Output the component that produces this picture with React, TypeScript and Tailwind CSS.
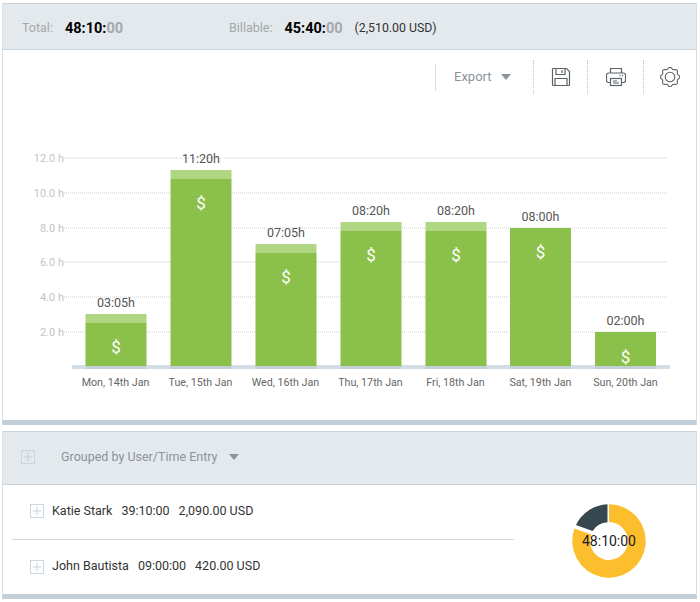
const days = [
  { label: "Mon, 14th Jan", time: "03:05h", x: 85.5, top: 314, billable: 323 },
  { label: "Tue, 15th Jan", time: "11:20h", x: 170.5, top: 170, billable: 179 },
  { label: "Wed, 16th Jan", time: "07:05h", x: 255.5, top: 244, billable: 253 },
  { label: "Thu, 17th Jan", time: "08:20h", x: 340.5, top: 222, billable: 231 },
  { label: "Fri, 18th Jan", time: "08:20h", x: 425.5, top: 222, billable: 231 },
  { label: "Sat, 19th Jan", time: "08:00h", x: 510, top: 228, billable: 228 },
  { label: "Sun, 20th Jan", time: "02:00h", x: 595, top: 332, billable: 332 },
];

const ticks = [
  { label: "12.0 h", y: 158 },
  { label: "10.0 h", y: 193 },
  { label: "8.0 h", y: 228 },
  { label: "6.0 h", y: 262 },
  { label: "4.0 h", y: 297 },
  { label: "2.0 h", y: 332 },
];

const users = [
  { name: "Katie Stark", time: "39:10:00", amount: "2,090.00 USD" },
  { name: "John Bautista", time: "09:00:00", amount: "420.00 USD" },
];

// scalloped outline of the settings gear
const gearPath =
  Array.from({ length: 96 }, (_, i) => {
    const a = (i / 96) * Math.PI * 2;
    const r = 8.9 + 0.9 * Math.cos(8 * a);
    return `${i === 0 ? "M" : "L"}${(10 + r * Math.sin(a)).toFixed(2)} ${(10 - r * Math.cos(a)).toFixed(2)}`;
  }).join("") + "Z";

function PlusBox({ className }: { className: string }) {
  return (
    <svg viewBox="0 0 15 15" className={className} fill="none">
      <rect x="0.5" y="0.5" width="14" height="14" stroke="#c9d4dc" />
      <path d="M7.5 3v9M3 7.5h9" stroke="#c3ced6" />
    </svg>
  );
}

function Caret() {
  return <span className="border-x-[5.5px] border-t-[6px] border-x-transparent border-t-[#8c9499]" />;
}

function FloppyIcon() {
  return (
    <svg viewBox="0 0 20 20" className="h-[20px] w-[20px]" fill="none" stroke="#5b6368" strokeWidth="1.2">
      <path d="M1.500 2.500a1 1 0 0 1 1-1h13l3 3v13a1 1 0 0 1-1 1h-15a1 1 0 0 1-1-1z" />
      <path d="M5 1.500v6h9v-6M11 3v3M4 18.500v-7h12v7" />
    </svg>
  );
}

function PrinterIcon() {
  return (
    <svg viewBox="0 0 20 20" className="h-[20px] w-[20px]" fill="none" stroke="#5b6368" strokeWidth="1.2">
      <path d="M4.500 6V1.500h11V6" />
      <path d="M4.500 15.500h-2a2 2 0 0 1-2-2V8a2 2 0 0 1 2-2h15a2 2 0 0 1 2 2v5.500a2 2 0 0 1-2 2h-2" />
      <rect x="4.500" y="11.500" width="11" height="7" />
      <path d="M7 14h4M7 16h6" strokeWidth="1" />
      <path d="M13.500 8.500h1M16 8.500h1" strokeWidth="1.4" />
    </svg>
  );
}

function GearIcon() {
  return (
    <svg viewBox="0 0 20 20" className="h-[20px] w-[20px]" fill="none" stroke="#5b6368" strokeWidth="1.1">
      <path d={gearPath} />
      <circle cx="10" cy="10" r="4.800" />
    </svg>
  );
}

function WeekChart() {
  return (
    <svg viewBox="3 100 694 270" className="block h-[270px] w-[694px]" style={{ fontFamily: "Roboto, sans-serif" }}>
      {ticks.map((t) => (
        <g key={t.label}>
          <line x1="64" x2="667" y1={t.y} y2={t.y} stroke="#cfcfcf" strokeDasharray="1 1" />
          <text x="64" y={t.y + 4} textAnchor="end" fontSize="11" fill="#c4c4c4">
            {t.label}
          </text>
        </g>
      ))}
      <rect x="72" y="365" width="598" height="4" fill="#d3dde5" />
      {days.map((d) => (
        <g key={d.label}>
          <rect x={d.x} y={d.top} width="61" height={d.billable - d.top} fill="#b0d683" />
          <rect x={d.x} y={d.billable} width="61" height={366 - d.billable} fill="#8bc14a" />
          <rect x={d.x} y="366" width="61" height="3" fill="#c4d0d8" />
          <text x={d.x + 30.5} y={d.top - 7} textAnchor="middle" fontSize="12.5" fill="#555">
            {d.time}
          </text>
          <text
            x={d.x + 30.5}
            y={d.label.startsWith("Sun") ? 363 : Math.min(d.billable + 30, 353)}
            textAnchor="middle"
            fontSize="17"
            fill="#fff"
          >
            $
          </text>
        </g>
      ))}
    </svg>
  );
}

function Donut() {
  return (
    <div className="relative flex h-[76px] w-[76px] items-center justify-center">
      <svg viewBox="0 0 76 76" className="absolute inset-0 h-[76px] w-[76px]">
        <path
          d="M38 1.300A36.700 36.700 0 1 1 3.500 25.500L20.200 31.500A18.900 18.900 0 1 0 38 19.100Z"
          fill="#fdbe2d"
        />
        <path d="M36.500 1.300V19.200A19 19 0 0 0 21.500 28L5 22A36.700 36.700 0 0 1 36.500 1.300Z" fill="#37474f" />
      </svg>
      <span className="relative text-[14px] text-[#1a1a1a]">48:10:00</span>
    </div>
  );
}

export default function App() {
  return (
    <div className="h-[602px] w-[700px] overflow-hidden bg-white pl-[2px] pr-[3px] pt-[3px] font-['Roboto',sans-serif]">
      {/* Summary + chart */}
      <div className="border-x border-x-[#d8e0e6] border-b-[5px] border-b-[#c3cfd8]">
        <div className="flex h-[47px] items-center border-y border-y-[#c8d3da] bg-[#e4e9ed] pl-[19px] pt-[4px] text-[12.5px] text-[#a3a8ab]">
          <span>Total:</span>
          <span className="ml-[12px] text-[14.5px] font-bold text-black">
            48:10:<span className="text-[#a3a8ab]">00</span>
          </span>
          <span className="ml-[106px]">Billable:</span>
          <span className="ml-[12px] text-[14.5px] font-bold text-black">
            45:40:<span className="text-[#a3a8ab]">00</span>
          </span>
          <span className="ml-[12px] text-[12.3px] text-[#333]">(2,510.00 USD)</span>
        </div>

        <div className="flex h-[50px] items-center justify-end pb-[6px] pt-[10px]">
          <div className="flex h-[27px] w-[98px] items-center gap-[9px] border-l border-l-[#d5dde3] pl-[18px] text-[13px] text-[#8c9499]">
            Export
            <Caret />
          </div>
          <div className="flex h-[34px] w-[54px] items-center justify-center border-l border-dotted border-l-[#b9c5cd]">
            <FloppyIcon />
          </div>
          <div className="flex h-[34px] w-[56px] items-center justify-center border-l border-dotted border-l-[#b9c5cd]">
            <PrinterIcon />
          </div>
          <div className="flex h-[34px] w-[53px] items-center justify-center border-l border-dotted border-l-[#b9c5cd]">
            <GearIcon />
          </div>
        </div>

        <WeekChart />
        <div className="flex h-[50px] items-start">
          {days.map((d, i) => (
            <span
              key={d.label}
              className={
                i === 0
                  ? "ml-[70px] w-[85px] pt-[5px] text-center text-[10.7px] text-[#666]"
                  : "w-[85px] pt-[5px] text-center text-[10.7px] text-[#666]"
              }
            >
              {d.label}
            </span>
          ))}
        </div>
      </div>

      {/* Grouped list */}
      <div className="mt-[6px] border-x border-x-[#d8e0e6] border-b-[5px] border-b-[#c3cfd8]">
        <div className="flex h-[54px] items-center border-y border-y-[#c8d3da] bg-[#e4e9ed] pb-[2px] pl-[18px] text-[12.5px] text-[#8c9499]">
          <PlusBox className="h-[14px] w-[14px]" />
          <span className="ml-[26px]">Grouped by User/Time Entry</span>
          <span className="ml-[11px] flex">
            <Caret />
          </span>
        </div>
        <div className="flex h-[109px]">
          <div className="ml-[9px] w-[502px]">
            {users.map((u, i) => (
              <div
                key={u.name}
                className={
                  i === 0
                    ? "flex h-[55px] items-center border-b border-b-[#cdd7de] pb-[2px] pl-[18px] text-[12.5px] text-[#333]"
                    : "flex h-[55px] items-center pb-[2px] pl-[18px] text-[12.5px] text-[#333]"
                }
              >
                <PlusBox className="h-[14px] w-[14px]" />
                <span className="ml-[8px]">{u.name}</span>
                <span className="ml-[9px]">{u.time}</span>
                <span className="ml-[9px]">{u.amount}</span>
              </div>
            ))}
          </div>
          <div className="ml-[57px] mt-[18px]">
            <Donut />
          </div>
        </div>
      </div>
    </div>
  );
}
